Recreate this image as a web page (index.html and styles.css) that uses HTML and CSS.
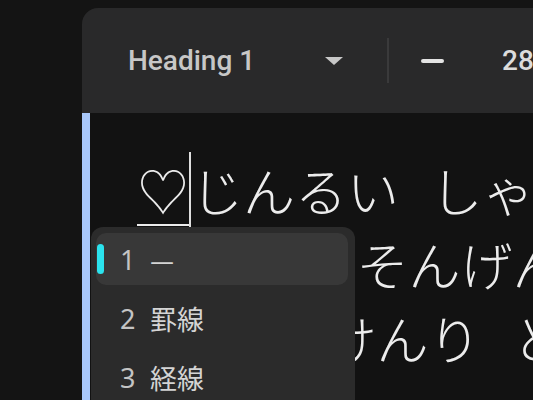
FILE: index.html
```html
<!DOCTYPE html>
<html lang="ja">
<head>
  <meta charset="UTF-8">
  <title>Editor</title>
  <link rel="stylesheet" href="styles.css">
</head>
<body>
  <div class="window">
    <div class="toolbar">
      <div class="style-select">
        <span>Heading 1</span>
        <svg class="caret-down" width="18" height="8" viewBox="0 0 18 8"><path d="M0 0h18l-9 8z" fill="#c7c7c7"/></svg>
      </div>
      <div class="divider"></div>
      <button class="minus"><span></span></button>
      <span class="font-size">28</span>
    </div>

    <div class="editor">
      <div class="line"><span class="composing">♡</span>じんるい しゃかいの すべての</div>
      <div class="line tight">こゆうの そんげんと びょうどう</div>
      <div class="line">ゆずる けんり とを しょうにん</div>
    </div>
  </div>

  <!-- IME candidate list -->
  <div class="candidates">
    <div class="candidate selected"><i class="mark"></i><span class="num">1</span><span>—</span></div>
    <div class="candidate"><i class="mark"></i><span class="num">2</span><span>罫線</span></div>
    <div class="candidate"><i class="mark"></i><span class="num">3</span><span>経線</span></div>
    <div class="candidate"><i class="mark"></i><span class="num">4</span><span>ー</span></div>
  </div>
</body>
</html>
```

FILE: styles.css
```css
/* Dark editor with IME popup */
body {
  margin: 0;
  background-color: #141414;
  overflow: hidden;
  height: 400px;
}

.window {
  margin: 8px 0 0 82px;
  width: 640px;
}

.toolbar {
  display: flex;
  align-items: center;
  height: 105px;
  background-color: #29292a;
  border-radius: 16px 16px 0 0;
  font-family: Roboto, "Noto Sans", sans-serif;
  font-weight: 500;
  font-size: 28px;
  color: #c7c7c7;
}

.style-select {
  display: flex;
  align-items: center;
  justify-content: space-between;
  width: 215px;
  margin-left: 46px;
}

.divider {
  width: 2px;
  height: 45px;
  margin-left: 44px;
  background-color: #3a3a3b;
}

.minus {
  margin-left: 32px;
  padding: 0;
  border: none;
  background: none;
  display: flex;
}

.minus span {
  width: 23px;
  height: 4px;
  border-radius: 2px;
  background-color: #e3e3e3;
}

.font-size {
  margin-left: 58px;
  color: #dcdcdc;
}

.editor {
  height: 300px;
  padding: 40px 0 0 47px;
  background-color: #121212;
  border-left: 8px solid #a8c7fa;
  font-family: "Noto Sans CJK JP", sans-serif;
  font-weight: 300;
  font-size: 52px;
  line-height: 74px;
  color: #ececec;
  word-spacing: 20px;
}

.line {
  white-space: nowrap;
}

.line.tight {
  word-spacing: normal;
}

.composing {
  border-right: 2px solid #dedede;
  text-decoration: underline;
  text-decoration-thickness: 2px;
  text-underline-offset: 12px;
}

.candidates {
  position: absolute;
  left: 91px;
  top: 227px;
  width: 252px;
  padding: 6px 7px 6px 5px;
  background-color: #2b2b2b;
  border-radius: 12px;
  font-family: "Noto Sans CJK JP", sans-serif;
  font-size: 27px;
  color: #d4d4d4;
}

.candidate {
  display: flex;
  align-items: center;
  height: 52px;
  margin-bottom: 7px;
  padding-left: 1px;
  border-radius: 10px;
}

.candidate.selected {
  background-color: #383838;
}

.mark {
  width: 7px;
  height: 30px;
  margin-right: 16px;
  border-radius: 4px;
  visibility: hidden;
}

.selected .mark {
  visibility: visible;
  background-color: #2be3ee;
}

.num {
  width: 30px;
  font-family: "Noto Sans", sans-serif;
  color: #c4c4c4;
}
```
